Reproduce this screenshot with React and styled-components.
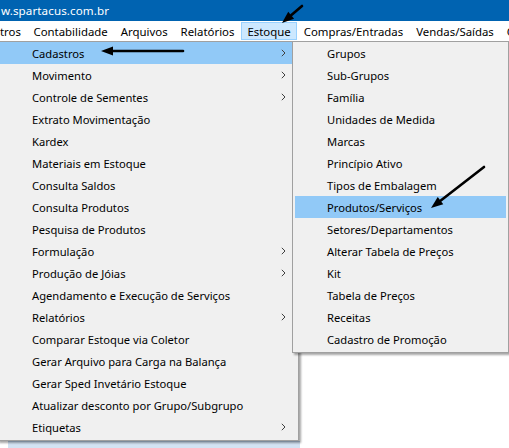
import React from "react";
import styled, { createGlobalStyle } from "styled-components";

const Global = createGlobalStyle`
  html, body { margin: 0; padding: 0; background: #fff; }
  body { font-family: "Segoe UI", "Noto Sans", "Liberation Sans", sans-serif; }
`;

const FONT = `"Segoe UI", "Noto Sans", "Liberation Sans", sans-serif`;

const Screen = styled.div`
  position: relative;
  width: 509px;
  height: 448px;
  overflow: hidden;
  background: #fff;
  display: flex;
  flex-direction: column;
  font-family: ${FONT};
  font-size: 11.2px;
  color: #000;
`;

const TitleBar = styled.div`
  height: 21px;
  flex: none;
  background: #0063b1;
  color: #fff;
  display: flex;
  align-items: center;
  padding-left: 1px;
  font-size: 11.6px;
  letter-spacing: 0.1px;
`;

const MenuBar = styled.div`
  height: 20px;
  flex: none;
  display: flex;
  align-items: stretch;
  background: #fff;
  white-space: nowrap;
  border-bottom: 1px solid #f0f0f0;
  font-size: 11.4px;
`;

const BarItem = styled.div`
  display: flex;
  align-items: center;
  padding: 0 ${(p) => (p.$first ? "0" : "5px")};
  margin: 1px ${(p) => (p.$first ? "5px" : "0.5px")} 1px ${(p) => (p.$first ? "-1px" : "0.5px")};
  border: 1px solid ${(p) => (p.$active ? "#99d1ff" : "transparent")};
  background: ${(p) => (p.$active ? "#cce8ff" : "transparent")};
`;

const Workspace = styled.div`
  flex: 1;
  display: flex;
  flex-direction: column;
  justify-content: flex-end;
  background: #fff;
`;

const BottomStrip = styled.div`
  height: 6px;
  margin-left: 8px;
  width: 292px;
  background: #d3e3f3;
  border-top: 1px solid #b8cfe6;
`;

const Menu = styled.div`
  position: absolute;
  left: ${(p) => p.$left}px;
  top: ${(p) => p.$top}px;
  width: ${(p) => p.$width}px;
  box-sizing: border-box;
  background: #f0f0f0;
  border: 1px solid #a0a0a0;
  padding: 0 2px 2px 2px;
  box-shadow: 2px 2px 2px rgba(0, 0, 0, 0.35);
  display: flex;
  flex-direction: column;
`;

const Item = styled.div`
  height: 22px;
  display: flex;
  align-items: center;
  justify-content: space-between;
  padding: 0 10px 0 32px;
  background: ${(p) => (p.$hl ? "#91c9f7" : "transparent")};
  white-space: nowrap;
`;

const Chevron = () => (
  <svg width="5" height="8" viewBox="0 0 5 8">
    <polyline points="0.8,0.8 4,4 0.8,7.2" fill="none" stroke="#404040" strokeWidth="1" />
  </svg>
);

const Annotations = styled.svg`
  position: absolute;
  left: 0;
  top: 0;
  pointer-events: none;
`;

const mainItems = [
  ["Cadastros", true],
  ["Movimento", true],
  ["Controle de Sementes", true],
  ["Extrato Movimentação"],
  ["Kardex"],
  ["Materiais em Estoque"],
  ["Consulta Saldos"],
  ["Consulta Produtos"],
  ["Pesquisa de Produtos"],
  ["Formulação", true],
  ["Produção de Jóias", true],
  ["Agendamento e Execução de Serviços"],
  ["Relatórios", true],
  ["Comparar Estoque via Coletor"],
  ["Gerar Arquivo para Carga na Balança"],
  ["Gerar Sped Invetário Estoque"],
  ["Atualizar desconto por Grupo/Subgrupo"],
  ["Etiquetas", true],
];

const subItems = [
  "Grupos",
  "Sub-Grupos",
  "Família",
  "Unidades de Medida",
  "Marcas",
  "Princípio Ativo",
  "Tipos de Embalagem",
  "Produtos/Serviços",
  "Setores/Departamentos",
  "Alterar Tabela de Preços",
  "Kit",
  "Tabela de Preços",
  "Receitas",
  "Cadastro de Promoção",
];

const barItems = ["tros", "Contabilidade", "Arquivos", "Relatórios", "Estoque", "Compras/Entradas", "Vendas/Saídas", "C"];

function Arrow({ x1, y1, x2, y2 }) {
  const ang = Math.atan2(y2 - y1, x2 - x1);
  const L = 12;
  const W = 4.5;
  const bx = x2 - L * Math.cos(ang);
  const by = y2 - L * Math.sin(ang);
  const px = -Math.sin(ang) * W;
  const py = Math.cos(ang) * W;
  return (
    <g>
      <line x1={x1} y1={y1} x2={bx} y2={by} stroke="#000" strokeWidth="2.6" strokeLinecap="round" />
      <polygon points={`${x2},${y2} ${bx + px},${by + py} ${bx - px},${by - py}`} fill="#000" />
    </g>
  );
}

export default function App() {
  return (
    <>
      <Global />
      <Screen>
        <TitleBar>w.spartacus.com.br</TitleBar>
        <MenuBar>
          {barItems.map((t, i) => (
            <BarItem key={t} $first={i === 0} $active={t === "Estoque"}>
              {t}
            </BarItem>
          ))}
        </MenuBar>
        <Workspace>
          <BottomStrip />
        </Workspace>

        <Menu $left={-3} $top={41} $width={302}>
          {mainItems.map(([t, sub]) => (
            <Item key={t} $hl={t === "Cadastros"}>
              <span>{t}</span>
              {sub && <Chevron />}
            </Item>
          ))}
        </Menu>

        <Menu $left={292} $top={41} $width={217}>
          {subItems.map((t) => (
            <Item key={t} $hl={t === "Produtos/Serviços"}>
              <span>{t}</span>
            </Item>
          ))}
        </Menu>

        <Annotations width="509" height="448" viewBox="0 0 509 448">
          <Arrow x1={302} y1={6} x2={282} y2={23} />
          <Arrow x1={183} y1={51} x2={101} y2={51} />
          <Arrow x1={484} y1={167} x2={431} y2={208} />
        </Annotations>
      </Screen>
    </>
  );
}
